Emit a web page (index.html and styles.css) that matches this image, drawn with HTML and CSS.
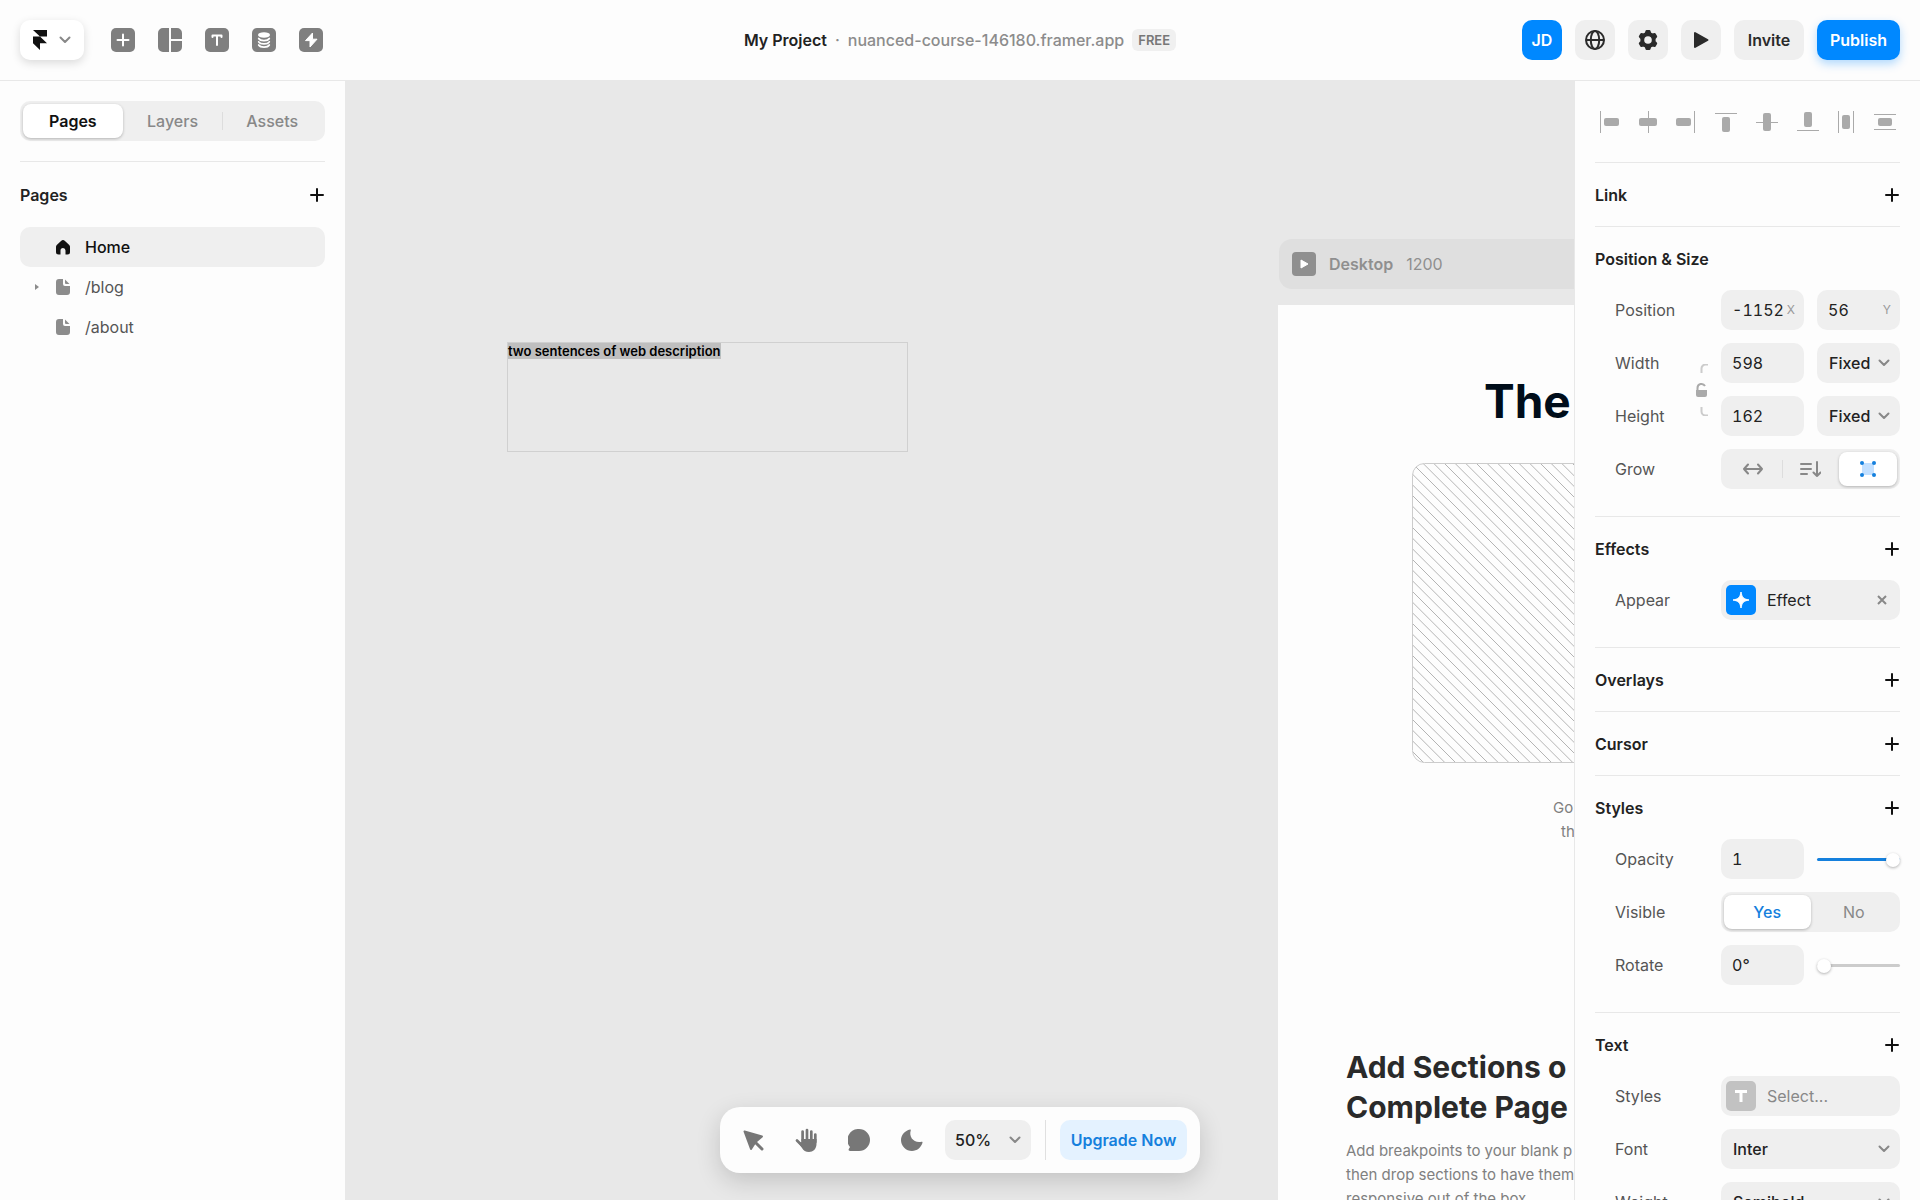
FILE: index.html
```html
<!DOCTYPE html>
<html lang="en">
<head>
<meta charset="utf-8">
<title>My Project</title>
<link rel="stylesheet" href="styles.css">
</head>
<body>
<svg class="defs" aria-hidden="true">
  <symbol id="plus" viewBox="0 0 14 14"><path d="M7 1v12M1 7h12" fill="none" stroke="currentColor" stroke-width="2" stroke-linecap="round"/></symbol>
  <symbol id="chevron" viewBox="0 0 12 8"><path d="M1.500 1.500 6 6l4.500-4.500" fill="none" stroke="currentColor" stroke-width="2" stroke-linecap="round" stroke-linejoin="round"/></symbol>
  <symbol id="page" viewBox="0 0 14 16"><path d="M3 0h4v5a2 2 0 0 0 2 2h5v6a3 3 0 0 1-3 3H3a3 3 0 0 1-3-3V3a3 3 0 0 1 3-3z" fill="currentColor"/><path d="M9 .5 13.500 5H10a1 1 0 0 1-1-1z" fill="currentColor"/></symbol>
</svg>

<header class="topbar">
  <nav class="tools" aria-label="Insert">
    <button class="menu" aria-label="Main menu">
      <svg width="14" height="20" viewBox="0 0 14 20"><path d="M0 0h14v6.600H7zM0 6.600h7l7 6.600H7V20l-7-6.800z" fill="#111"/></svg>
      <svg class="grey" width="12" height="8"><use href="#chevron"/></svg>
    </button>
    <button class="tool" aria-label="Insert"><svg width="24" height="24"><rect width="24" height="24" rx="5" fill="currentColor"/><path d="M12 6.500v11M6.500 12h11" stroke="#fff" stroke-width="2" stroke-linecap="round"/></svg></button>
    <button class="tool" aria-label="Layout"><svg width="24" height="24"><path d="M5 0h6v24H5a5 5 0 0 1-5-5V5a5 5 0 0 1 5-5zM13 0h6a5 5 0 0 1 5 5v6H13zM13 13h11v6a5 5 0 0 1-5 5h-6z" fill="currentColor"/></svg></button>
    <button class="tool" aria-label="Text"><svg width="24" height="24"><rect width="24" height="24" rx="5" fill="currentColor"/><path d="M7.500 9V7.500h9V9M12 7.500v9.500" fill="none" stroke="#fff" stroke-width="2" stroke-linecap="round" stroke-linejoin="round"/></svg></button>
    <button class="tool" aria-label="CMS"><svg width="24" height="24"><rect width="24" height="24" rx="5" fill="currentColor"/><ellipse cx="12" cy="7" rx="6" ry="2.700" fill="#fff"/><path d="M6.700 10.500c1.600 2.800 9 2.800 10.600 0M6.700 13.800c1.600 2.800 9 2.800 10.600 0M6.700 17c1.600 2.800 9 2.800 10.600 0" fill="none" stroke="#fff" stroke-width="1.700" stroke-linecap="round"/></svg></button>
    <button class="tool" aria-label="Actions"><svg width="24" height="24"><rect width="24" height="24" rx="5" fill="currentColor"/><path d="M13.500 5 6.500 12.600h4.500V19l7-7.800h-4.500z" fill="#fff" stroke="#fff" stroke-linejoin="round"/></svg></button>
  </nav>
  <div class="project">
    <span class="project-name">My Project</span>
    <span>·</span>
    <a href="#site">nuanced-course-146180.framer.app</a>
    <span class="badge">FREE</span>
  </div>
  <div class="actions">
    <button class="btn square primary">JD</button>
    <button class="btn square" aria-label="Language"><svg width="20" height="20" fill="none" stroke="currentColor" stroke-width="2"><circle cx="10" cy="10" r="9"/><ellipse cx="10" cy="10" rx="4.200" ry="9"/><path d="M1 10h18"/></svg></button>
    <button class="btn square" aria-label="Settings"><svg width="20" height="20"><path fill="currentColor" stroke="currentColor" stroke-width="2" stroke-linejoin="round" fill-rule="evenodd" d="M8.500 1h3l.8 2.300 2 1.100 2.400-.4 1.500 2.600L16.600 8.500v3l1.600 1.900-1.500 2.600-2.400-.4-2 1.100-.8 2.300h-3l-.8-2.300-2-1.100-2.400.4-1.500-2.600 1.600-1.900v-3L1.800 6.600 3.300 4l2.400.4 2-1.100z"/><circle cx="10" cy="10" r="3.800" fill="#efefef"/></svg></button>
    <button class="btn square" aria-label="Preview"><svg width="16" height="18"><path d="M2 2v14l12.500-7z" fill="currentColor" stroke="currentColor" stroke-width="2" stroke-linejoin="round"/></svg></button>
    <button class="btn invite">Invite</button>
    <button class="btn primary publish">Publish</button>
  </div>
</header>

<div class="workspace">
  <aside class="sidebar">
    <div class="segmented tabs" role="tablist">
      <button class="segment active" role="tab" aria-selected="true">Pages</button>
      <button class="segment" role="tab">Layers</button>
      <button class="segment divided" role="tab">Assets</button>
    </div>
    <section class="section">
      <div class="section-head"><h2>Pages</h2><button class="add" aria-label="Add page"><svg width="14" height="14"><use href="#plus"/></svg></button></div>
      <ul class="pages">
        <li><a class="page current" href="#home"><span class="twist"></span><svg width="14" height="15"><path d="M7 0c.7 0 1.200.3 1.700.7l4.300 4c.7.600 1 1.200 1 2V12a2.500 2.500 0 0 1-2.500 2.500H9.500V10.500a2.500 2.500 0 0 0-5 0v4H2.500A2.500 2.500 0 0 1 0 12V6.700c0-.8.3-1.400 1-2l4.300-4C5.800.3 6.300 0 7 0z" fill="currentColor"/></svg>Home</a></li>
        <li><a class="page" href="#blog"><span class="twist"><svg width="4" height="6"><path d="M0 0l4 3-4 3z" fill="currentColor"/></svg></span><svg width="14" height="16"><use href="#page"/></svg><span class="page-name">/blog</span></a></li>
        <li><a class="page" href="#about"><span class="twist"></span><svg width="14" height="16"><use href="#page"/></svg><span class="page-name">/about</span></a></li>
      </ul>
    </section>
  </aside>

  <main class="canvas">
    <div class="text-layer"><mark>two sentences of web description</mark></div>
    <div class="frame-label">
      <svg width="24" height="24"><rect width="24" height="24" rx="4" fill="#8f8f8f"/><path d="M9 8v8l7-4z" fill="#fff" stroke="#fff" stroke-linejoin="round"/></svg>
      <strong>Desktop</strong><span>1200</span>
    </div>
    <article class="frame">
      <h1>The</h1>
      <svg class="placeholder" width="532" height="300"><defs><pattern id="hatch" width="32" height="32" patternUnits="userSpaceOnUse"><path d="M-2-2l36 36M8.670-2l36 36M19.330-2l36 36M-12.670-2l36 36M-23.330-2l36 36M-34-2l36 36" stroke="#b4b4b4"/></pattern></defs><rect x=".5" y=".5" width="531" height="299" rx="12" fill="url(#hatch)" stroke="#ccc"/></svg>
      <p class="caption">Go<br><span>th</span></p>
      <h2>Add Sections o<br>Complete Page</h2>
      <p class="body">Add breakpoints to your blank p<br>then drop sections to have them<br>responsive out of the box.</p>
    </article>

    <div class="dock">
      <button class="dock-tool" aria-label="Select"><svg width="21" height="21" viewBox="0 0 21 21"><path d="M1.500 1.500 19 6.500l-6.500 5.500L8 19z" fill="currentColor" stroke="currentColor" stroke-width="2" stroke-linejoin="round"/><path d="m13 13 6 6" stroke="currentColor" stroke-width="3" stroke-linecap="round"/></svg></button>
      <button class="dock-tool" aria-label="Hand"><svg width="22" height="24" viewBox="0 0 22 24"><path d="M7.600 13V3.500M12 12V2M16.300 13V3.500M20.300 14V6.500M2 12.500l5 5" stroke="currentColor" stroke-width="2.700" stroke-linecap="round"/><path d="M6.500 11h15v5c0 5-3.500 8-7.500 8-3.500 0-5.500-1.500-7-4l-3.500-5 3-1z" fill="currentColor"/></svg></button>
      <button class="dock-tool" aria-label="Comment"><svg width="22" height="22" viewBox="0 0 22 22"><path d="M11 0a11 11 0 1 1 0 22H2c-1.200 0-1.800-1-1.200-2l1.200-2A11 11 0 0 1 11 0z" fill="currentColor"/></svg></button>
      <button class="dock-tool" aria-label="Dark mode"><svg width="22" height="22" viewBox="0 0 22 22"><path d="M9 .5C9.500.3 10 .8 9.800 1.300 7.500 8 13 14.500 20.500 12.800c.7-.2 1.200.300 1 1C20 18.700 16 22 11 22A11 11 0 0 1 0 11C0 6 4 1.800 9 .5z" fill="currentColor"/></svg></button>
      <label class="pick zoom"><select aria-label="Zoom"><option>50%</option></select><svg width="12" height="8"><use href="#chevron"/></svg></label>
      <span class="dock-rule"></span>
      <button class="btn upgrade">Upgrade Now</button>
    </div>
  </main>

  <aside class="inspector">
    <div class="align">
      <button aria-label="Align left"><svg width="20" height="22"><path d="M1.500 0v22" stroke="currentColor"/><rect x="5" y="7" width="15" height="8" rx="2"/></svg></button>
      <button aria-label="Align center"><svg width="20" height="22"><path d="M10.500 0v22" stroke="currentColor"/><rect x="1" y="7" width="18" height="8" rx="2"/></svg></button>
      <button aria-label="Align right"><svg width="20" height="22"><path d="M18.500 0v22" stroke="currentColor"/><rect x="0" y="7" width="15" height="8" rx="2"/></svg></button>
      <button aria-label="Align top"><svg width="22" height="20"><path d="M0 1.500h22" stroke="currentColor"/><rect x="7" y="5" width="8" height="15" rx="2"/></svg></button>
      <button aria-label="Align middle"><svg width="22" height="20"><path d="M0 10.500h22" stroke="currentColor"/><rect x="7" y="1" width="8" height="18" rx="2"/></svg></button>
      <button aria-label="Align bottom"><svg width="22" height="20"><path d="M0 18.500h22" stroke="currentColor"/><rect x="7" y="0" width="8" height="15" rx="2"/></svg></button>
      <button aria-label="Distribute horizontally"><svg width="18" height="22"><path d="M1.500 0v22M16.500 0v22" stroke="currentColor"/><rect x="5" y="4" width="8" height="14" rx="2"/></svg></button>
      <button aria-label="Distribute vertically"><svg width="22" height="18"><path d="M0 1.500h22M0 16.500h22" stroke="currentColor"/><rect x="4" y="5" width="14" height="8" rx="2"/></svg></button>
    </div>
    <section class="section">
      <div class="section-head"><h2>Link</h2><button class="add" aria-label="Add link"><svg width="14" height="14"><use href="#plus"/></svg></button></div>
    </section>
    <section class="section rows">
      <div class="section-head"><h2>Position &amp; Size</h2></div>
      <div class="row"><label for="pos-x">Position</label><div class="pair">
        <div class="field"><input id="pos-x" value="-1152"><span class="unit">X</span></div>
        <div class="field"><input aria-label="Position Y" value="56"><span class="unit">Y</span></div></div></div>
      <div class="size">
        <label for="width">Width</label>
        <button class="lock" aria-label="Lock ratio"><svg width="13" height="52" fill="none"><path d="M12 .5H9.500a4 4 0 0 0-4 4V9M12 51.500H9.500a4 4 0 0 1-4-4V43" stroke="#ccc" stroke-width="2"/><path d="M1.500 27v-3a4 4 0 0 1 7.500-2" stroke="#aaa" stroke-width="2"/><path d="M0 26h11v5a2 2 0 0 1-2 2H2a2 2 0 0 1-2-2z" fill="#aaa"/></svg></button>
        <div class="pair"><div class="field"><input id="width" value="598"></div><div class="pick"><select aria-label="Width mode"><option>Fixed</option></select><svg width="12" height="8"><use href="#chevron"/></svg></div></div>
        <label for="height">Height</label>
        <div class="pair"><div class="field"><input id="height" value="162"></div><div class="pick"><select aria-label="Height mode"><option>Fixed</option></select><svg width="12" height="8"><use href="#chevron"/></svg></div></div>
      </div>
      <div class="row"><span>Grow</span><div class="segmented grow" role="group" aria-label="Grow">
        <button class="segment" aria-label="Auto width"><svg width="20" height="12" fill="none" stroke="currentColor" stroke-width="2" stroke-linecap="round" stroke-linejoin="round"><path d="M1 6h18M5 1.500 1 6l4 4.500M15 1.500 19 6l-4 4.500"/></svg></button>
        <button class="segment divided" aria-label="Auto height"><svg width="21" height="16" fill="none" stroke="currentColor" stroke-width="2" stroke-linecap="round" stroke-linejoin="round"><path d="M1 3h10M1 8h10M1 13h6M17 1v14M13.500 11.500 17 15l3.500-3.500"/></svg></button>
        <button class="segment active" aria-label="Fixed size" aria-pressed="true"><svg width="16" height="16"><path d="M2 2h12v12H2z" fill="#c3e0ff"/><g fill="#1580dd"><circle cx="2" cy="2" r="2"/><circle cx="14" cy="2" r="2"/><circle cx="2" cy="14" r="2"/><circle cx="14" cy="14" r="2"/></g></svg></button>
      </div></div>
    </section>
    <section class="section rows">
      <div class="section-head"><h2>Effects</h2><button class="add" aria-label="Add effect"><svg width="14" height="14"><use href="#plus"/></svg></button></div>
      <div class="row"><span>Appear</span><div class="chip">
        <button class="chip-main"><svg width="30" height="30"><rect width="30" height="30" rx="5" fill="#08f"/><path d="M15 7c1 5.500 2.500 7 8 8-5.500 1-7 2.500-8 8-1-5.500-2.500-7-8-8 5.500-1 7-2.500 8-8z" fill="#fff" stroke="#fff" stroke-linejoin="round"/></svg>Effect</button>
        <button class="add" aria-label="Remove effect"><svg class="grey" width="10" height="10"><path d="m1 1 8 8M9 1 1 9" stroke="currentColor" stroke-width="2"/></svg></button></div></div>
    </section>
    <section class="section">
      <div class="section-head"><h2>Overlays</h2><button class="add" aria-label="Add overlay"><svg width="14" height="14"><use href="#plus"/></svg></button></div>
    </section>
    <section class="section">
      <div class="section-head"><h2>Cursor</h2><button class="add" aria-label="Add cursor"><svg width="14" height="14"><use href="#plus"/></svg></button></div>
    </section>
    <section class="section rows">
      <div class="section-head"><h2>Styles</h2><button class="add" aria-label="Add style"><svg width="14" height="14"><use href="#plus"/></svg></button></div>
      <div class="row"><label for="opacity">Opacity</label><div class="pair"><div class="field"><input id="opacity" value="1"></div><input class="slider full" type="range" aria-label="Opacity" value="100"></div></div>
      <div class="row"><span>Visible</span><div class="segmented" role="radiogroup" aria-label="Visible">
        <label class="segment active"><input type="radio" name="visible" checked>Yes</label>
        <label class="segment"><input type="radio" name="visible">No</label></div></div>
      <div class="row"><label for="rotate">Rotate</label><div class="pair"><div class="field"><input id="rotate" value="0°"></div><input class="slider" type="range" aria-label="Rotate" value="0"></div></div>
    </section>
    <section class="section rows">
      <div class="section-head"><h2>Text</h2><button class="add" aria-label="Add text style"><svg width="14" height="14"><use href="#plus"/></svg></button></div>
      <div class="row"><span>Styles</span><button class="chip chip-main empty"><svg width="30" height="30"><rect width="30" height="30" rx="5" fill="#c2c2c2"/><path d="M9 10.500h12M15 10.500V21" stroke="#fff" stroke-width="3"/></svg>Select...</button></div>
      <div class="row"><label for="font">Font</label><div class="pick wide"><select id="font"><option>Inter</option></select><svg width="12" height="8"><use href="#chevron"/></svg></div></div>
      <div class="row"><label for="weight">Weight</label><div class="pick wide"><select id="weight"><option>Semibold</option></select><svg width="12" height="8"><use href="#chevron"/></svg></div></div>
    </section>
  </aside>
</div>
</body>
</html>
```
FILE: styles.css
```css
* { box-sizing: border-box; }
body {
  margin: 0;
  height: 100vh;
  display: flex;
  flex-direction: column;
  overflow: hidden;
  background: #fdfdfd;
  color: #222;
  font: 400 16px/24px Inter, "Liberation Sans", sans-serif;
}
button, input, select { font: inherit; color: inherit; margin: 0; }
button { padding: 0; border: 0; background: none; display: flex; align-items: center; justify-content: center; }
h1, h2, p, ul { margin: 0; padding: 0; }
a { color: inherit; text-decoration: none; }
svg { display: block; flex: none; }
.defs { position: absolute; width: 0; height: 0; }
.grey { color: #888; }

/* Top bar */
.topbar {
  flex: none;
  height: 81px;
  padding: 0 20px;
  border-bottom: 1px solid #e8e8e8;
  display: grid;
  grid-template-columns: 1fr auto 1fr;
  align-items: center;
}
.tools { display: flex; align-items: center; gap: 23px; }
.tool { color: #7f7f7f; }
.menu {
  width: 64px;
  height: 40px;
  margin-right: 4px;
  gap: 12px;
  border-radius: 10px;
  background: #fff;
  box-shadow: 0 3px 10px rgba(0, 0, 0, .14);
}
.project { display: flex; align-items: center; gap: 8px; color: #8c8c8c; font-weight: 500; }
.project-name { color: #222; font-weight: 600; }
.badge { padding: 0 6px; border-radius: 6px; background: #f0f0f0; color: #777; font-size: 13px; line-height: 22px; font-weight: 600; }
.actions { display: flex; justify-content: flex-end; gap: 13px; }
.btn { height: 40px; border-radius: 10px; background: #efefef; font-weight: 600; color: #2a2a2a; }
.square { width: 40px; }
.invite { width: 70px; }
.publish { width: 83px; box-shadow: 0 4px 10px rgba(0, 136, 255, .3); }
.primary { background: #08f; color: #fff; }

.workspace { flex: 1; min-height: 0; display: flex; }

/* Side panels */
.sidebar, .inspector { flex: none; width: 346px; padding: 0 20px; overflow: hidden; }
.sidebar { border-right: 1px solid #e8e8e8; padding-top: 20px; }
.inspector { border-left: 1px solid #e8e8e8; }
.segmented { height: 40px; padding: 3px; border-radius: 10px; background: #efefef; display: flex; }
.segment { flex: 1; position: relative; display: flex; align-items: center; justify-content: center; color: #888; border-radius: 8px; }
.segment.active { background: #fff; color: #1580dd; font-weight: 500; box-shadow: 0 1px 3px rgba(0, 0, 0, .25); }
.segment input { position: absolute; inset: 0; margin: 0; appearance: none; }
.segment.divided::before { content: ""; position: absolute; left: 0; top: 8px; bottom: 8px; border-left: 1px solid #ddd; }
.tabs .segment { font-weight: 500; }
.tabs .segment.active { color: #111; font-weight: 600; }
.section { border-top: 1px solid #e8e8e8; }
.sidebar .section { margin-top: 20px; }
.section-head { height: 63px; display: flex; align-items: center; justify-content: space-between; }
.sidebar .section-head { height: 65px; }
.section-head h2 { font-size: 16px; line-height: 24px; font-weight: 600; }
.add { width: 14px; height: 24px; color: #111; margin-right: 1px; }

.pages { list-style: none; }
.page { height: 40px; padding-left: 15px; border-radius: 10px; display: flex; align-items: center; color: #8c8c8c; }
.page > svg { margin-right: 15px; }
.page-name { color: #555; }
.page.current { background: #efefef; color: #111; font-weight: 500; }
.twist { width: 21px; }

.align { height: 81px; padding: 0 4px; display: flex; align-items: center; justify-content: space-between; color: #aaa; }
.align svg { fill: currentColor; }
.rows { display: flex; flex-direction: column; gap: 13px; padding-bottom: 27px; }
.rows .section-head { margin-bottom: -13px; }
.row { padding-left: 20px; display: flex; align-items: center; justify-content: space-between; color: #555; }
.row > :last-child { width: 179px; flex: none; }
.pair { display: flex; gap: 13px; color: #222; }
.pair > * { width: 83px; flex: none; }
.size { padding-left: 20px; display: grid; grid-template-columns: 1fr 13px 179px; column-gap: 12px; row-gap: 13px; align-items: center; color: #555; }
.lock { grid-row: 1 / 3; grid-column: 2; }
.field, .pick { display: grid; align-items: center; color: #222; }
.field > *, .pick > * { grid-area: 1 / 1; }
.field input, .pick select { width: 100%; height: 40px; padding: 0 11px; border: 0; border-radius: 10px; background: #efefef; outline: 0; }
.field input { font-variant-numeric: tabular-nums; }
.pick select { appearance: none; padding: 0 12px; font-weight: 500; }
.pick svg { justify-self: end; margin-right: 10px; color: #888; pointer-events: none; }
.unit { justify-self: end; margin-right: 9px; font-size: 12px; color: #999; }
.chip { height: 40px; padding: 0 10px 0 5px; border-radius: 10px; background: #efefef; display: flex; align-items: center; justify-content: space-between; color: #222; }
.chip-main { gap: 11px; justify-content: flex-start; }
.chip-main.empty { color: #888; }

.slider { appearance: none; height: 40px; background: none; }
.slider::-webkit-slider-runnable-track { height: 3px; border-radius: 2px; background: #ccc; }
.slider.full::-webkit-slider-runnable-track { background: #1580dd; }
.slider::-webkit-slider-thumb { appearance: none; width: 14px; height: 14px; margin-top: -5px; border-radius: 50%; background: #fff; box-shadow: 0 1px 3px rgba(0, 0, 0, .3); }

/* Canvas */
.canvas { flex: 1; position: relative; overflow: hidden; background: #e8e8e8; }
.text-layer { position: absolute; left: 161px; top: 261px; width: 401px; height: 110px; border: 1px solid #d0d0d0; font-size: 13px; line-height: 16px; font-weight: 600; color: #000; }
.text-layer mark { background: #bfbfbf; color: inherit; }
.frame-label { position: absolute; left: 933px; top: 158px; width: 800px; height: 50px; padding: 0 13px; border-radius: 13px; background: #dfdfdf; display: flex; align-items: center; gap: 13px; color: #8f8f8f; }
.frame-label strong { font-weight: 600; }
.frame { position: absolute; left: 932px; top: 224px; width: 800px; height: 1200px; padding: 64px 68px; background: #fdfdfd; white-space: nowrap; color: #808080; }
.frame h1 { padding-left: 138px; font-size: 46px; line-height: 64px; font-weight: 700; color: #000d1a; }
.placeholder { margin: 30px auto 0; }
.caption { margin-top: 33px; padding-left: 207px; font-size: 15px; }
.caption span { padding-left: 8px; }
.frame h2 { margin-top: 203px; font-size: 30px; line-height: 40px; font-weight: 700; color: #2a2a2a; }
.body { margin-top: 12px; font-size: 15px; }

/* Floating dock */
.dock { position: absolute; left: 50%; bottom: 27px; transform: translateX(-50%); height: 66px; padding: 0 13px; border-radius: 20px; background: #fdfdfd; box-shadow: 0 8px 24px rgba(0, 0, 0, .16); display: flex; align-items: center; gap: 13px; }
.dock-tool { width: 40px; height: 40px; color: #777; }
.zoom { width: 86px; font-weight: 500; }
.zoom select { padding: 0 10px; }
.dock-rule { height: 40px; margin: 0 1px; border-left: 1px solid #e0e0e0; }
.upgrade { width: 127px; background: #e4f2ff; color: #1580dd; }
```
